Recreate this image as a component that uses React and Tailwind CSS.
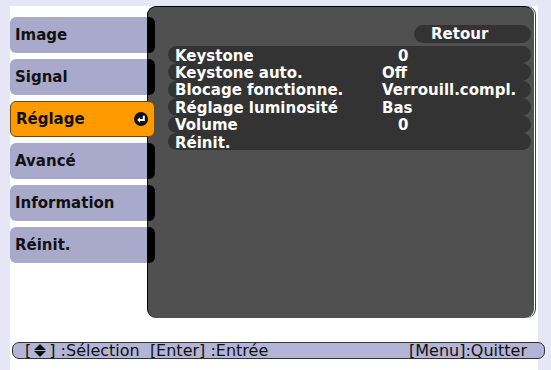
import React from 'react';

const tabs = ['Image', 'Signal', 'Réglage', 'Avancé', 'Information', 'Réinit.'];
const selected = 'Réglage';

const rows = [
  { label: 'Keystone', value: '0', indent: true },
  { label: 'Keystone auto.', value: 'Off' },
  { label: 'Blocage fonctionne.', value: 'Verrouill.compl.' },
  { label: 'Réglage luminosité', value: 'Bas' },
  { label: 'Volume', value: '0', indent: true },
  { label: 'Réinit.', value: '' },
];

const EnterIcon = () => (
  <svg width="14" height="14" viewBox="0 0 14 14">
    <circle cx="7" cy="7" r="7" fill="#111" />
    <path d="M9.8 3.8 V8 H5" stroke="#fff" strokeWidth="2" fill="none" />
    <path d="M3.2 8 L6 5.2 L6 10.8 Z" fill="#fff" />
  </svg>
);

const UpDownIcon = () => (
  <svg width="12" height="13" viewBox="0 0 12 13" className="inline-block mx-[3px]">
    <path d="M6 0 L12 6 H0 Z" fill="#111" />
    <path d="M0 7 H12 L6 13 Z" fill="#111" />
  </svg>
);

const Tab = ({ name }) => {
  if (name === selected) {
    return (
      <div className="h-[36px] w-[145px] flex items-center justify-between pl-[5px] pr-[6px] bg-[#ff9a00] border border-[#6b4a10] rounded-[6px] text-[#111]">
        <span>{name}</span>
        <EnterIcon />
      </div>
    );
  }
  return (
    <div className="h-[36px] w-[145px] flex">
      <div className="w-[137px] flex items-center pl-[5px] bg-[#a9a9cb] rounded-l-[6px] text-[#111]">{name}</div>
      <div className="w-[8px] bg-black rounded-r-[6px]" />
    </div>
  );
};

export default function App() {
  return (
    <div
      className="w-[551px] h-[370px] bg-[#e6e6f6] overflow-hidden pt-[6px] pl-[10px]"
      style={{ fontFamily: '"DejaVu Sans", sans-serif' }}
    >
      <div className="w-[528px] h-[364px] bg-white flex flex-col">
        {/* Main area */}
        <div className="flex h-[312px]">
          {/* Tabs */}
          <div className="relative z-10 flex flex-col gap-[6px] pt-[11px] text-[15px] font-bold leading-none">
            {tabs.map((t) => (
              <Tab key={t} name={t} />
            ))}
          </div>

          {/* Panel */}
          <div className="-ml-[8px] w-[387px] h-[312px] bg-[#505050] border-t border-l border-black rounded-[9px] shadow-[1px_0_0_#ffffff,2px_0_0_#444] pt-[18px] pr-[3px] text-white text-[15px] font-bold leading-none">
            <div className="flex justify-end">
              <div className="w-[117px] h-[18px] bg-[#333333] rounded-full flex items-center pl-[17px]">Retour</div>
            </div>
            <div className="pl-[20px] mt-[3px]">
              {rows.map((r) => (
                <div key={r.label} className="h-[17.4px] bg-[#333333] rounded-full flex items-center pl-[7px] pt-[3px]">
                  <span className="w-[207px]">{r.label}</span>
                  <span className={r.indent ? 'pl-[16px]' : ''}>{r.value}</span>
                </div>
              ))}
            </div>
          </div>
        </div>

        {/* Status bar */}
        <div className="mt-[24px] ml-[2px] w-[533px] h-[17px] bg-[#b4b4d6] border border-[#333] rounded-[7px] flex items-center justify-between pl-[12px] pr-[17px] text-[16px] text-[#111] leading-none">
          <span className="flex items-center whitespace-pre">
            [<UpDownIcon />] :Sélection  [Enter] :Entrée
          </span>
          <span>[Menu]:Quitter</span>
        </div>
      </div>
    </div>
  );
}
